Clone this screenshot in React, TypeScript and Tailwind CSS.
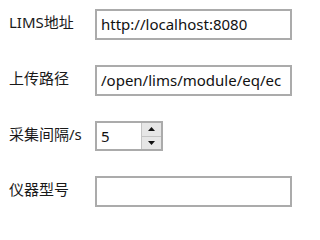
import { useState } from 'react';

const font = { fontFamily: '"Noto Sans", "Noto Sans CJK SC", sans-serif' };

const Label = ({ children }: { children: string }) => (
  <div className="w-[86px] shrink-0 text-[15px] leading-[22px] text-[#1a1a1a] pt-[2px]">{children}</div>
);

const TextBox = ({ value }: { value: string }) => (
  <div className="w-[197px] h-[31px] border-2 border-[#ababab] bg-white flex items-center pl-[4px] overflow-hidden">
    <span className="whitespace-nowrap text-[15px] text-[#111]">{value}</span>
  </div>
);

const Spinner = ({ value, onChange }: { value: number; onChange: (v: number) => void }) => (
  <div className="w-[68px] h-[30px] border-2 border-[#ababab] bg-white flex">
    <div className="flex-1 flex items-center pl-[4px] text-[15px] text-[#111]">{value}</div>
    <div className="w-[20px] flex flex-col border-l border-[#c4c4c4]">
      <button
        onClick={() => onChange(value + 1)}
        className="flex-1 bg-[#e6e6e6] border-b border-[#c4c4c4] flex items-center justify-center"
      >
        <svg width="7" height="4" viewBox="0 0 7 4"><path d="M0 4 L3.5 0 L7 4 Z" fill="#111" /></svg>
      </button>
      <button
        onClick={() => onChange(Math.max(0, value - 1))}
        className="flex-1 bg-[#e6e6e6] flex items-center justify-center"
      >
        <svg width="7" height="4" viewBox="0 0 7 4"><path d="M0 0 L7 0 L3.5 4 Z" fill="#111" /></svg>
      </button>
    </div>
  </div>
);

export default function App() {
  const [interval, setInterval] = useState(5);

  return (
    <div className="w-[299px] h-[216px] bg-white pl-[9px] pt-[9px] flex flex-col gap-[25px]" style={font}>
      <div className="flex items-start">
        <Label>LIMS地址</Label>
        <TextBox value="http://localhost:8080" />
      </div>
      <div className="flex items-start">
        <Label>上传路径</Label>
        <TextBox value="/open/lims/module/eq/ec" />
      </div>
      <div className="flex items-start">
        <Label>采集间隔/s</Label>
        <Spinner value={interval} onChange={setInterval} />
      </div>
      <div className="flex items-start">
        <Label>仪器型号</Label>
        <TextBox value="" />
      </div>
    </div>
  );
}
